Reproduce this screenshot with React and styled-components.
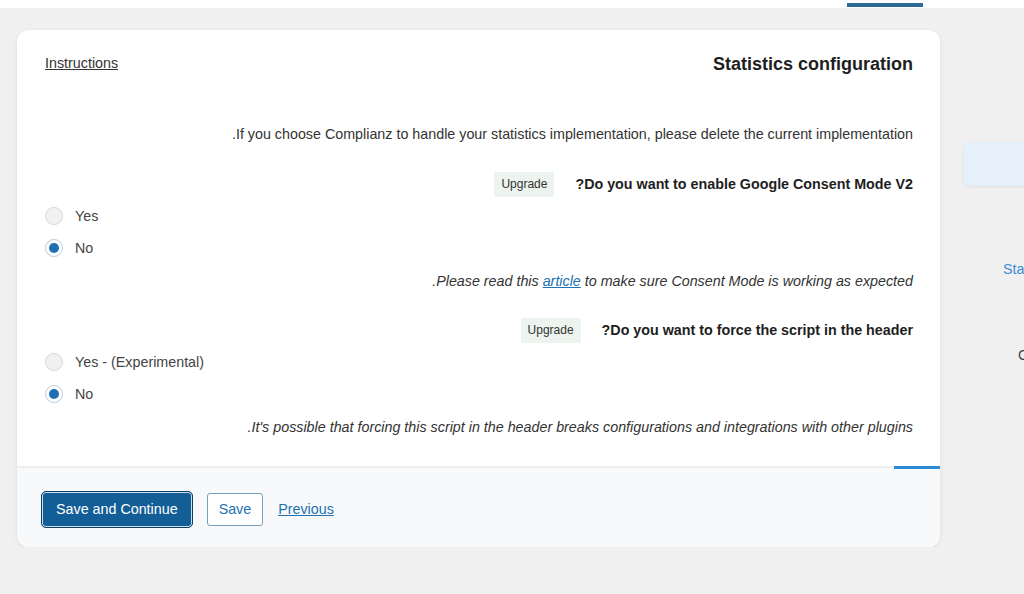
import React from "react";
import styled, { createGlobalStyle } from "styled-components";

const Global = createGlobalStyle`
  html, body { margin: 0; padding: 0; }
  body {
    background: #f0f0f1;
    font-family: "Liberation Sans", Arial, sans-serif;
    color: #1e1e1e;
    overflow: hidden;
  }
  * { box-sizing: border-box; }
`;

const TopBar = styled.div`
  height: 8px;
  background: #fff;
  position: relative;
`;

const TabIndicator = styled.div`
  position: absolute;
  left: 847px;
  top: 3px;
  width: 76px;
  height: 4px;
  background: #2b6a96;
`;

const Layout = styled.div`
  display: flex;
  align-items: flex-start;
  gap: 23px;
  padding: 22px 0 0 17px;
`;

const Card = styled.div`
  width: 923px;
  flex: none;
  background: #fff;
  border-radius: 12px;
  box-shadow: 0 1px 4px rgba(0, 0, 0, 0.08);
  overflow: hidden;
`;

const Body = styled.div`
  padding: 19px 27px 29px 28px;
  display: flex;
  flex-direction: column;
`;

const Header = styled.div`
  height: 30px;
  display: flex;
  align-items: center;
  justify-content: space-between;
  margin-bottom: 46px;
`;

const InstructionsLink = styled.a`
  font-size: 14.3px;
  color: #333;
  text-decoration: underline;
  margin-top: -2px;
`;

const Title = styled.h1`
  margin: 0;
  font-size: 18px;
  font-weight: 700;
  color: #1e1e1e;
  direction: rtl;
`;

const Fields = styled.div`
  display: flex;
  flex-direction: column;
  gap: 26px;
`;

const Intro = styled.p`
  margin: -1px 0 1px;
  height: 20px;
  line-height: 20px;
  font-size: 14.3px;
  color: #333;
  direction: rtl;
  text-align: right;
`;

const Group = styled.div`
  display: flex;
  flex-direction: column;
`;

const QuestionRow = styled.div`
  height: 26px;
  display: flex;
  flex-direction: row-reverse;
  align-items: center;
  gap: 21px;
  margin-bottom: 3px;
`;

const Question = styled.div`
  font-size: 14.3px;
  font-weight: 700;
  color: #1e1e1e;
  direction: rtl;
`;

const Badge = styled.span`
  display: inline-flex;
  align-items: center;
  height: 25px;
  padding: 0 7px;
  background: #edf3ee;
  color: #333;
  font-size: 12px;
  border-radius: 2px;
`;

const RadioList = styled.div`
  display: flex;
  flex-direction: column;
`;

const RadioRow = styled.label`
  height: 32px;
  display: flex;
  align-items: center;
  gap: 12px;
  font-size: 14.3px;
  color: #444;
`;

const RadioDot = styled.span`
  width: 18px;
  height: 18px;
  border-radius: 50%;
  border: 1px solid ${(p) => (p.$checked ? "#b9cde0" : "#d6d6d6")};
  background: ${(p) => (p.$checked ? "#fff" : "#f1f1f1")};
  display: inline-flex;
  align-items: center;
  justify-content: center;
  flex: none;
  &::after {
    content: "";
    width: 10px;
    height: 10px;
    border-radius: 50%;
    background: #1f6fb5;
    display: ${(p) => (p.$checked ? "block" : "none")};
  }
`;

const Help = styled.p`
  margin: 7px 0 0;
  height: 20px;
  line-height: 20px;
  font-size: 14.3px;
  font-style: italic;
  color: #333;
  direction: rtl;
  text-align: right;
`;

const HelpLink = styled.a`
  color: #2271b1;
  text-decoration: underline;
`;

const Footer = styled.div`
  height: 81px;
  background: #f8f9fa;
  border-top: 2px solid #eceeef;
  position: relative;
  display: flex;
  align-items: center;
  gap: 14px;
  padding: 3px 0 0 24px;
`;

const Progress = styled.div`
  position: absolute;
  right: 0;
  top: -2px;
  width: 46px;
  height: 3px;
  background: #2a8ad6;
`;

const PrimaryButton = styled.button`
  height: 37px;
  padding: 0 14px;
  border-radius: 5px;
  border: 1px solid #0b3f66;
  box-shadow: inset 0 0 0 1px #cfe1f0;
  background: #135e96;
  color: #fff;
  font-family: inherit;
  font-size: 14.3px;
`;

const SecondaryButton = styled.button`
  height: 33px;
  padding: 0 11px;
  border-radius: 3px;
  border: 1px solid #7a9fb8;
  background: #fff;
  color: #2271b1;
  font-family: inherit;
  font-size: 14.3px;
`;

const TextLink = styled.a`
  color: #2271b1;
  font-size: 14.3px;
  text-decoration: underline;
  margin-left: 1px;
`;

const Sidebar = styled.div`
  flex: 1;
  display: flex;
  flex-direction: column;
  padding-top: 112px;
`;

const SideActive = styled.div`
  height: 44px;
  margin-right: -20px;
  background: #e5f0fa;
  border-radius: 8px;
  box-shadow: 0 1px 3px rgba(0, 0, 0, 0.08);
`;

const SideItem = styled.div`
  font-size: 14.3px;
  color: ${(p) => (p.$active ? "#3a8ad0" : "#444")};
  padding-left: ${(p) => p.$indent}px;
  margin-top: ${(p) => p.$gap}px;
  white-space: nowrap;
  line-height: 16px;
`;

function Radio({ label, checked }) {
  return (
    <RadioRow>
      <RadioDot $checked={checked} />
      {label}
    </RadioRow>
  );
}

export default function App() {
  return (
    <>
      <Global />
      <TopBar>
        <TabIndicator />
      </TopBar>
      <Layout>
        <Card>
          <Body>
            <Header>
              <InstructionsLink>Instructions</InstructionsLink>
              <Title>Statistics configuration</Title>
            </Header>
            <Fields>
              <Intro>
                If you choose Complianz to handle your statistics implementation, please delete the current implementation.
              </Intro>
              <Group>
                <QuestionRow>
                  <Question>Do you want to enable Google Consent Mode V2?</Question>
                  <Badge>Upgrade</Badge>
                </QuestionRow>
                <RadioList>
                  <Radio label="Yes" />
                  <Radio label="No" checked />
                </RadioList>
                <Help>
                  Please read this <HelpLink>article</HelpLink> to make sure Consent Mode is working as expected.
                </Help>
              </Group>
              <Group>
                <QuestionRow>
                  <Question>Do you want to force the script in the header?</Question>
                  <Badge>Upgrade</Badge>
                </QuestionRow>
                <RadioList>
                  <Radio label="Yes - (Experimental)" />
                  <Radio label="No" checked />
                </RadioList>
                <Help>
                  It's possible that forcing this script in the header breaks configurations and integrations with other plugins.
                </Help>
              </Group>
            </Fields>
          </Body>
          <Footer>
            <Progress />
            <PrimaryButton>Save and Continue</PrimaryButton>
            <SecondaryButton>Save</SecondaryButton>
            <TextLink>Previous</TextLink>
          </Footer>
        </Card>
        <Sidebar>
          <SideActive />
          <SideItem $active $indent={40} $gap={75}>Statistics</SideItem>
          <SideItem $indent={55} $gap={70}>Consent</SideItem>
        </Sidebar>
      </Layout>
    </>
  );
}
